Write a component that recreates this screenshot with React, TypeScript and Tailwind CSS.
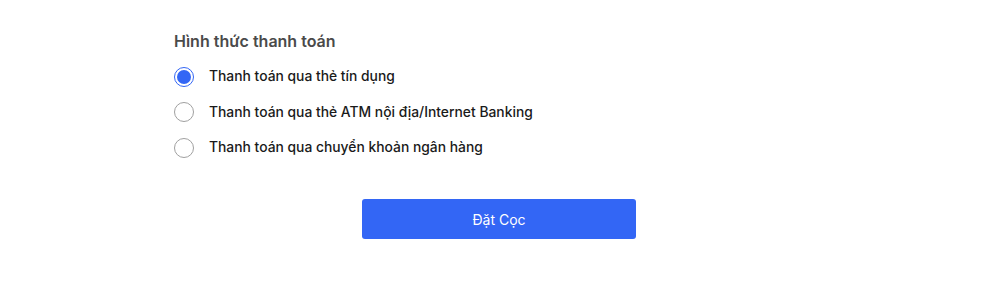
const OPTIONS = [
  "Thanh toán qua thẻ tín dụng",
  "Thanh toán qua thẻ ATM nội địa/Internet Banking",
  "Thanh toán qua chuyển khoản ngân hàng",
];

export default function App() {
  const selected = 0;

  return (
    <div className="min-h-[305px] bg-white font-['Inter','Noto_Sans',sans-serif]">
      <div className="mx-auto w-[652px] pt-[30px]">
        <h3 className="text-[16px] font-semibold leading-[22px] text-[#4a4a4a]">
          Hình thức thanh toán
        </h3>
        <div className="mt-[14px] flex flex-col gap-[14.5px]">
          {OPTIONS.map((label, i) => (
            <label key={label} className="flex h-[21px] items-center gap-[15px]">
              {selected === i ? (
                <span className="flex h-5 w-5 items-center justify-center rounded-full border border-[#3366f5]">
                  <span className="h-[14px] w-[14px] rounded-full bg-[#3366f5]" />
                </span>
              ) : (
                <span className="h-5 w-5 rounded-full border border-[#a0a0a0]" />
              )}
              <span className="text-[13.85px] font-medium text-[#1a1a1a]">{label}</span>
            </label>
          ))}
        </div>
        <button className="ml-[188px] mt-[41px] flex h-10 w-[274px] items-center justify-center rounded-[3px] bg-[#3366f5] text-[14px] text-white">
          Đặt Cọc
        </button>
      </div>
    </div>
  );
}
